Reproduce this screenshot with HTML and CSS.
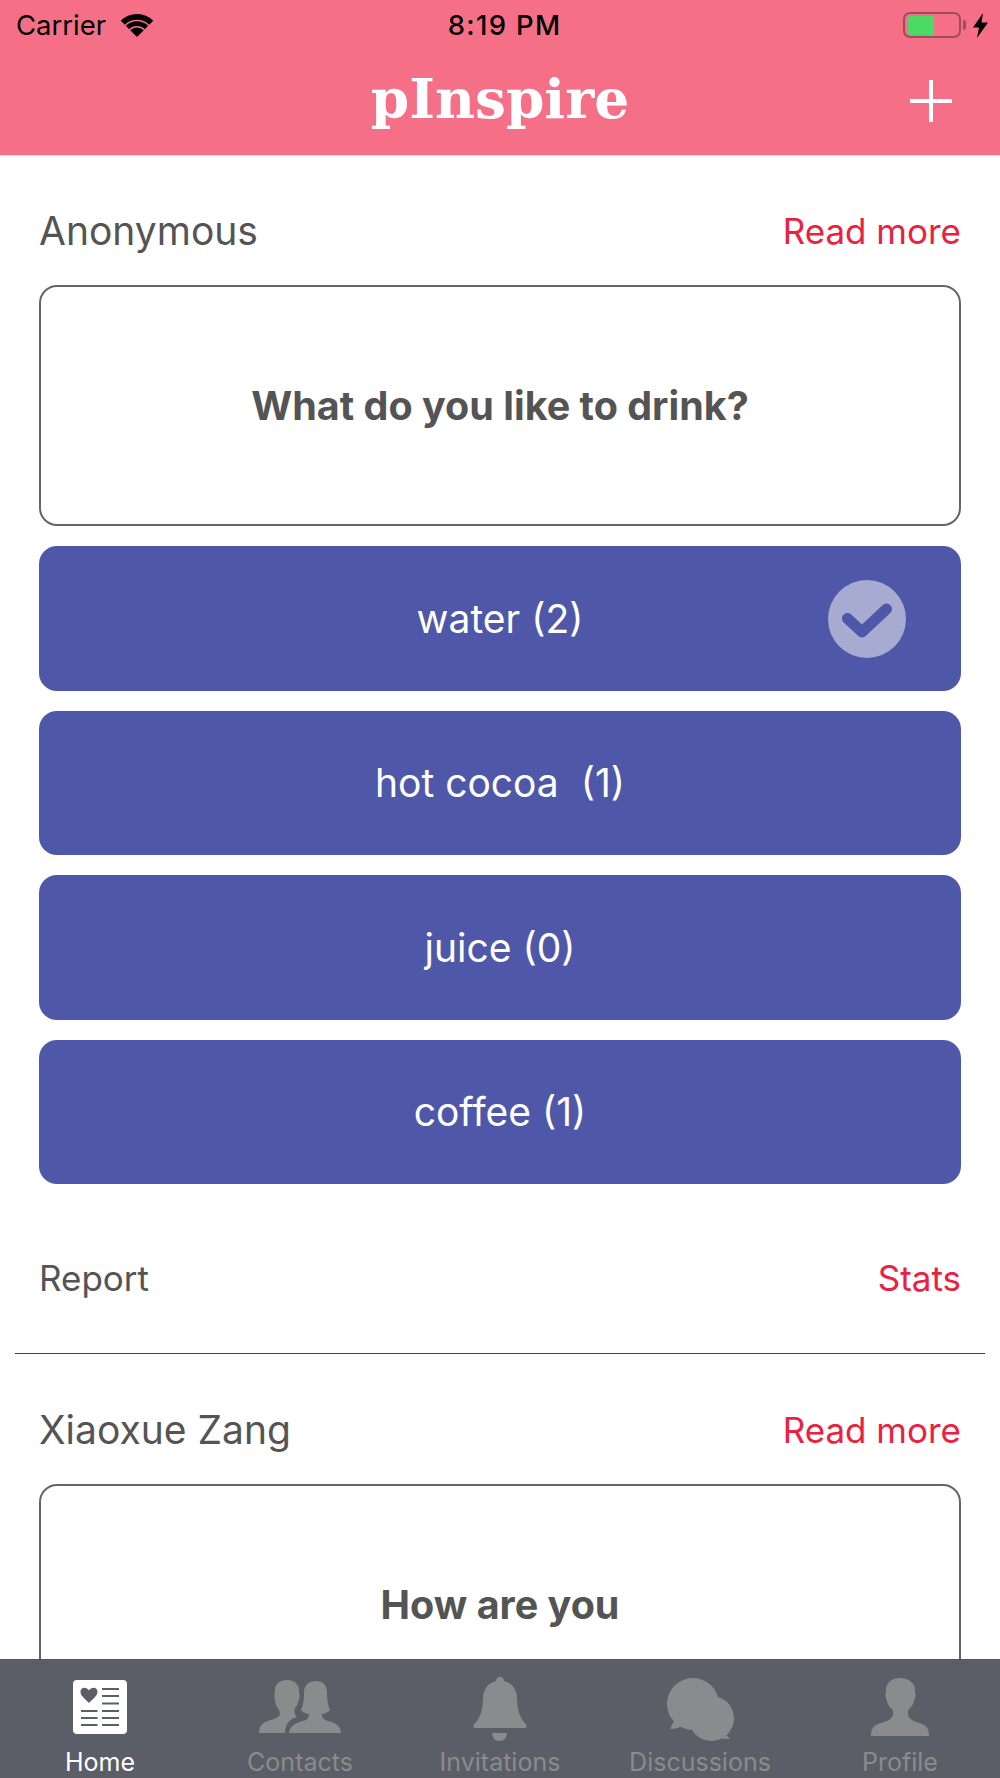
FILE: index.html
```html
<!DOCTYPE html>
<html lang="en">
<head>
    <meta charset="UTF-8">
    <meta name="viewport" content="width=device-width, initial-scale=1.0">
    <title>pInspire</title>
    <link rel="stylesheet" href="styles.css">
</head>
<body>
    <div class="app">
        <!-- pink header with status bar -->
        <div class="header">
            <div class="status">
                <div class="status-left">
                    <span>Carrier</span>
                    <svg class="wifi" viewBox="0 0 34 24" width="34" height="23">
                        <path d="M17 24 L9.930 16.930 A10 10 0 0 1 24.070 16.930 Z" fill="#000"/>
                        <path d="M7.100 14.100 A14 14 0 0 1 26.900 14.100" stroke="#000" stroke-width="5" fill="none"/>
                        <path d="M2.150 9.150 A21 21 0 0 1 31.850 9.150" stroke="#000" stroke-width="6" fill="none"/>
                    </svg>
                </div>
                <div class="status-time">8:19 PM</div>
                <div class="status-right">
                    <div class="battery"><div class="battery-fill"></div></div>
                    <div class="battery-tip"></div>
                    <svg class="bolt" viewBox="0 0 15 25" width="15" height="25">
                        <path d="M10 0 L0 14.500 H6 L4 25 L15 9.500 H8.500 Z" fill="#000"/>
                    </svg>
                </div>
            </div>
            <div class="nav">
                <div class="logo">pInspire</div>
                <svg class="plus" viewBox="0 0 42 42" width="42" height="42">
                    <path d="M21 0 V42 M0 21 H42" stroke="#fff" stroke-width="4" fill="none"/>
                </svg>
            </div>
        </div>

        <!-- feed, cut off by the tab bar -->
        <div class="feed">
            <div class="post">
                <div class="post-top">
                    <span class="author">Anonymous</span>
                    <span class="link">Read more</span>
                </div>
                <div class="question">What do you like to drink?</div>
                <div class="options">
                    <div class="option">water (2)
                        <svg class="check" viewBox="0 0 78 78" width="78" height="78">
                            <circle cx="39" cy="39" r="39" fill="#a7abd2"/>
                            <path d="M19.500 38.500 L34 52 L58.500 29" stroke="#4f58a8" stroke-width="11" stroke-linecap="round" stroke-linejoin="round" fill="none"/>
                        </svg>
                    </div>
                    <div class="option">hot cocoa&nbsp; (1)</div>
                    <div class="option">juice (0)</div>
                    <div class="option">coffee (1)</div>
                </div>
                <div class="post-bottom">
                    <span class="report">Report</span>
                    <span class="link">Stats</span>
                </div>
            </div>
            <div class="divider"></div>
            <div class="post">
                <div class="post-top">
                    <span class="author">Xiaoxue Zang</span>
                    <span class="link">Read more</span>
                </div>
                <div class="question">How are you</div>
            </div>
        </div>

        <!-- tab bar -->
        <div class="tabs">
            <div class="tab active">
                <div class="tab-icon">
                    <svg viewBox="0 0 54 54" width="54" height="54">
                        <rect width="54" height="54" rx="4" fill="#fff"/>
                        <path d="M16 23 C12 19 7.500 15.500 7.500 12 C7.500 7 13.500 6.500 16 10.500 C18.500 6.500 24.500 7 24.500 12 C24.500 15.500 20 19 16 23 Z" fill="#5b5e66"/>
                        <path d="M29 9 H46 M29 16 H46 M29 23.500 H46 M29 31 H46 M29 38 H46 M29 45 H46 M8 31 H24.500 M8 38 H24.500 M8 45 H24.500" stroke="#5b5e66" stroke-width="2" fill="none"/>
                    </svg>
                </div>
                <span>Home</span>
            </div>
            <div class="tab">
                <div class="tab-icon">
                    <svg viewBox="0 0 83 54" width="83" height="54">
                        <path d="M0 53 C0 46 3 43 9 41 C14 39 20 38 21 34 C21 32 20 30 19 28 C17 26 16 22 16 19 C15 17 15 14 16 12 C15 5 20 0 28 0 C36 0 41 5 40 12 C41 14 41 17 40 19 C39 23 38 26 36 28 C35 31 35 34 38 37 C30 39 26 45 26 53 Z" fill="#8a8b8d"/>
                        <path d="M30 53 C31 46 36 43 44 41 C48 40 50 38 50 34 C47 34 44 32 42 30 C44 26 45 20 45 13 C45 5 50 1 57 1 C64 1 68 5 68 13 C68 20 69 26 71 30 C69 32 66 34 63 34 C63 38 65 40 69 41 C77 43 82 46 82 53 Z" fill="#8a8b8d"/>
                    </svg>
                </div>
                <span>Contacts</span>
            </div>
            <div class="tab">
                <div class="tab-icon low">
                    <svg viewBox="0 0 54 64" width="54" height="64">
                        <path d="M27 0 C29.500 0 31 1.800 31 4 C39 6 44 12 44 22 C44 32 47 42 53 47 C54.500 49 53 51 51 51 H3 C1 51 -0.500 49 1 47 C7 42 10 32 10 22 C10 12 15 6 23 4 C23 1.800 24.500 0 27 0 Z" fill="#8a8b8d"/>
                        <path d="M19 56 H34 C33.500 61 31 64 26.500 64 C22 64 19.500 61 19 56 Z" fill="#8a8b8d"/>
                    </svg>
                </div>
                <span>Invitations</span>
            </div>
            <div class="tab">
                <div class="tab-icon low">
                    <svg viewBox="-1 0 68 63" width="68" height="63">
                        <circle cx="26" cy="26" r="26" fill="#8a8b8d"/>
                        <circle cx="44.500" cy="40.500" r="22.500" fill="#8a8b8d"/>
                        <path d="M8 41 L3 51 C8 51 14 49 19 46 Z" fill="#8a8b8d"/>
                        <path d="M56 54 L63 61 C59 61 55 61 51 59 Z" fill="#8a8b8d"/>
                    </svg>
                </div>
                <span>Discussions</span>
            </div>
            <div class="tab">
                <div class="tab-icon">
                    <svg viewBox="0 0 58 58" width="58" height="58">
                        <path d="M0 58 C0 51 2 48 7 46 C13 44 20 43 22 37 C22 34 22 32 21 31 C18 29 16 25 15.500 21 C14 19 14 16 15 14 C14 6 20 0 29 0 C38 0 45 6 44 14 C45 16 45 19 43.500 21 C43 25 41 29 38 31 C37 32 37 34 37 37 C39 43 46 44 51 46 C56 48 58 51 58 58 Z" fill="#8a8b8d"/>
                    </svg>
                </div>
                <span>Profile</span>
            </div>
        </div>
    </div>
</body>
</html>
```

FILE: styles.css
```css
html, body {
    margin: 0;
    padding: 0;
}
body {
    font-family: Inter, "Liberation Sans", sans-serif;
    color: #545454;
    background-color: white;
}
.app {
    display: flex;
    flex-direction: column;
    width: 1000px;
    height: 1778px;
    overflow: hidden;
}

/* HEADER */
.header {
    flex: none;
    height: 155px;
    background-color: #f57087;
    border-bottom: 1px solid #e4e4e4;
}
.status {
    display: grid;
    grid-template-columns: 1fr auto 1fr;
    align-items: center;
    height: 50px;
    padding: 0 12px 0 16px;
    font-size: 27.5px;
    color: black;
}
.status-left {
    display: flex;
    align-items: center;
    gap: 14px;
}
.status-time {
    margin-left: 5px;
    font-weight: 500;
    letter-spacing: 1.3px;
}
.status-right {
    display: flex;
    align-items: center;
    justify-content: flex-end;
}
.battery {
    width: 58px;
    height: 26px;
    box-sizing: border-box;
    padding: 1.5px 2.5px;
    border: 2.5px solid #a04c60;
    border-radius: 7px;
}
.battery-fill {
    width: 26px;
    height: 100%;
    background-color: #4cd964;
    border-radius: 3px 0 0 3px;
}
.battery-tip {
    width: 3px;
    height: 10px;
    margin-left: 2px;
    background-color: #a04c60;
    border-radius: 0 5px 5px 0;
}
.bolt {
    margin-left: 7px;
}
.nav {
    display: flex;
    align-items: center;
    justify-content: center;
    position: relative;
    box-sizing: border-box;
    height: 105px;
    padding-bottom: 9px;
}
.logo {
    font-family: "DejaVu Serif", "Liberation Serif", serif;
    font-weight: bold;
    font-size: 55px;
    color: white;
}
.plus {
    position: absolute;
    right: 48px;
    top: 30px;
}

/* FEED */
.feed {
    flex: 1;
    min-height: 0;
    overflow: hidden;
}
.post {
    padding: 0 39px;
}
.post-top {
    display: flex;
    justify-content: space-between;
    align-items: center;
    box-sizing: border-box;
    height: 129px;
    padding-top: 20px;
}
.author {
    font-size: 39px;
}
.link {
    font-size: 35px;
    color: #ea2140;
}
.question {
    display: flex;
    align-items: center;
    justify-content: center;
    height: 241px;
    box-sizing: border-box;
    border: 2px solid #666;
    border-radius: 18px;
    font-size: 39.5px;
    font-weight: bold;
}
.options {
    display: flex;
    flex-direction: column;
    gap: 20px;
    margin-top: 20px;
}
.option {
    display: flex;
    align-items: center;
    justify-content: center;
    position: relative;
    height: 144.5px;
    background-color: #4f58a8;
    border-radius: 18px;
    font-size: 39px;
    color: white;
}
.check {
    position: absolute;
    right: 55px;
    top: 34px;
}
.post-bottom {
    display: flex;
    justify-content: space-between;
    align-items: center;
    box-sizing: border-box;
    height: 169px;
    padding-top: 19px;
    font-size: 35px;
}
.divider {
    height: 1px;
    margin: 0 15px 1px;
    background-color: #444;
}

/* TAB BAR */
.tabs {
    flex: none;
    display: flex;
    box-sizing: border-box;
    height: 119px;
    background-color: #5b5e66;
    border-top: 1px solid #555;
}
.tab {
    display: flex;
    flex-direction: column;
    align-items: center;
    flex: 1;
    padding-top: 7px;
    font-size: 25px;
    color: #8a8b8d;
}
.tab span {
    line-height: 32px;
}
.tab.active {
    color: white;
}
.tab-icon {
    display: flex;
    align-items: center;
    flex: 1;
    min-height: 0;
}
.tab-icon.low {
    padding-top: 5px;
}
```
